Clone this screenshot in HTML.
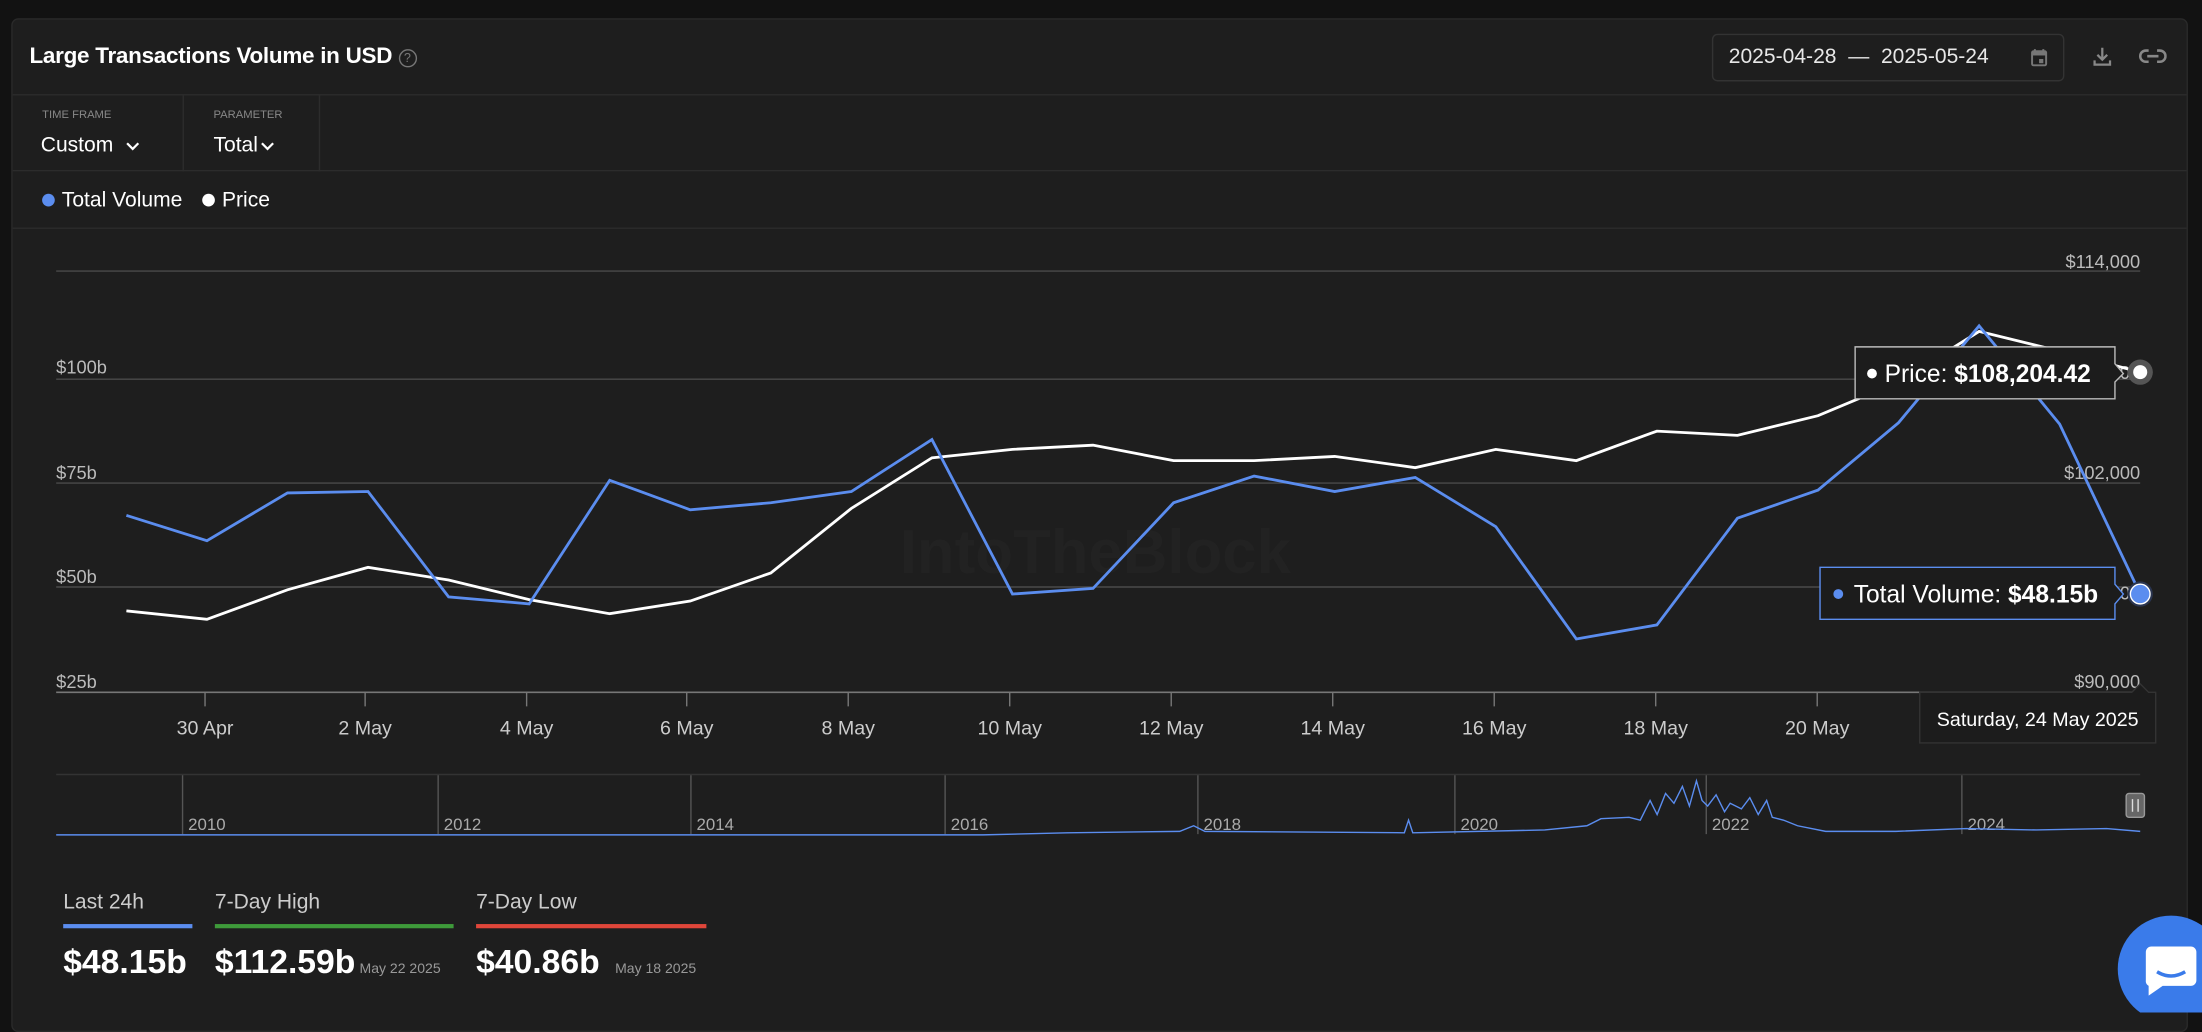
<!DOCTYPE html>
<html><head><meta charset="utf-8"><style>
html,body{margin:0;padding:0;background:#121212;width:2202px;height:1012px;overflow:hidden}
#s{position:absolute;left:0;top:0;width:1568px;height:721px;transform:scale(1.40434);transform-origin:0 0;font-family:"Liberation Sans",sans-serif;color:#fff}
.p{position:absolute;left:8px;top:13px;width:1548px;height:720px;background:#1e1e1e;border:1px solid #2a2a2a;border-radius:5px}
.hl{position:absolute;left:0;width:100%;height:1px;background:#2c2c2c}
.a{position:absolute;white-space:nowrap}
</style></head><body><div id="s">
<div class="p">
 <div class="a" style="left:12px;top:18px;font-size:16px;font-weight:bold;letter-spacing:-0.2px">Large Transactions Volume in USD <span style="display:inline-block;width:11px;height:11px;border:1.3px solid #777;border-radius:50%;color:#777;font-size:9px;text-align:center;line-height:11px;font-weight:normal;vertical-align:1px">?</span></div>
 <div class="a" style="left:1210px;top:10px;width:249px;height:32px;border:1px solid #333;border-radius:4px;font-size:15px;color:#e8e8e8;line-height:32px;text-indent:11px">2025-04-28 &nbsp;— &nbsp;2025-05-24
  <svg style="position:absolute;left:226px;top:9px" width="12" height="14" viewBox="0 0 12 14"><rect x="1" y="2.5" width="10" height="10" rx="1" fill="none" stroke="#777" stroke-width="1.4"/><rect x="1" y="2.5" width="10" height="3" fill="#777"/><rect x="6" y="8" width="3" height="3" fill="#777"/><path d="M3 1v2M9 1v2" stroke="#777" stroke-width="1.4"/></svg></div>
 <svg class="a" style="left:1480px;top:18px" width="16" height="16" viewBox="0 0 16 16"><path d="M8 2v8M4.5 7L8 10.5 11.5 7M2.5 11v3h11v-3" fill="none" stroke="#888" stroke-width="1.6"/></svg>
 <svg class="a" style="left:1514px;top:20px" width="20" height="12" viewBox="0 0 20 12"><path d="M7 2H5a4 4 0 0 0 0 8h2M13 2h2a4 4 0 0 1 0 8h-2M6 6h8" fill="none" stroke="#888" stroke-width="1.8"/></svg>
 <div class="hl" style="top:53px"></div>
 <div class="a" style="left:121px;top:54px;width:1px;height:54px;background:#2c2c2c"></div>
 <div class="a" style="left:218px;top:54px;width:1px;height:54px;background:#2c2c2c"></div>
 <div class="a" style="left:21px;top:63px;font-size:8px;color:#888">TIME FRAME</div>
 <div class="a" style="left:143px;top:63px;font-size:8px;color:#888">PARAMETER</div>
 <div class="a" style="left:20px;top:81px;font-size:15px">Custom <svg width="11" height="8" viewBox="0 0 11 8" style="margin-left:4px"><path d="M1.5 2l4 4 4-4" fill="none" stroke="#fff" stroke-width="1.6"/></svg></div>
 <div class="a" style="left:143px;top:81px;font-size:15px">Total<svg width="11" height="8" viewBox="0 0 11 8" style="margin-left:1px"><path d="M1.5 2l4 4 4-4" fill="none" stroke="#fff" stroke-width="1.6"/></svg></div>
 <div class="hl" style="top:107px"></div>
 <div class="a" style="left:21px;top:120px;font-size:15px"><span style="display:inline-block;width:9px;height:9px;border-radius:50%;background:#5b8def;margin-right:5px"></span>Total Volume <span style="display:inline-block;width:9px;height:9px;border-radius:50%;background:#fff;margin:0 5px 0 10px"></span>Price</div>
 <div class="hl" style="top:148px"></div>
</div>
<svg class="a" style="left:0;top:0" width="1568" height="721" viewBox="0 0 1568 721" font-family="Liberation Sans, sans-serif">
 <g stroke="#4a4a4a" stroke-width="1"><path d="M40 193H1524M40 270H1524M40 344H1524M40 418H1524"/></g>
 <path d="M40 493H1524" stroke="#777" stroke-width="1.2"/>
 <g stroke="#777"><path d="M146 493v10M260 493v10M375 493v10M489 493v10M604 493v10M719 493v10M834 493v10M949 493v10M1064 493v10M1179 493v10M1294 493v10"/></g>
 <text x="780" y="408" font-size="44" font-weight="bold" fill="#222" text-anchor="middle">IntoTheBlock</text>
 <g font-size="13" fill="#bbb"><text x="40" y="266">$100b</text><text x="40" y="341">$75b</text><text x="40" y="415">$50b</text><text x="40" y="490">$25b</text>
 <g text-anchor="end"><text x="1524" y="191">$114,000</text><text x="1524" y="341">$102,000</text><text x="1524" y="490">$90,000</text><text x="1524" y="270">$108,000</text><text x="1524" y="427">$96,000</text></g></g>
 <g font-size="14" fill="#ccc" text-anchor="middle"><text x="146" y="523">30 Apr</text><text x="260" y="523">2 May</text><text x="375" y="523">4 May</text><text x="489" y="523">6 May</text><text x="604" y="523">8 May</text><text x="719" y="523">10 May</text><text x="834" y="523">12 May</text><text x="949" y="523">14 May</text><text x="1064" y="523">16 May</text><text x="1179" y="523">18 May</text><text x="1294" y="523">20 May</text></g>
 <polyline fill="none" stroke="#fff" stroke-width="2" points="90,435 147.36,441 204.72,420 262.08,404 319.44,413 376.8,427 434.16,437 491.52,428 548.88,408 606.24,362 663.6,326 720.96,320 778.32,317 835.68,328 893.04,328 950.4,325 1007.76,333 1065.12,320 1122.48,328 1179.84,307 1237.2,310 1294.56,296 1351.92,272 1409.28,236 1466.64,250 1524,265"/>
 <polyline fill="none" stroke="#5b8def" stroke-width="2" points="90,367 147.36,385 204.72,351 262.08,350 319.44,425 376.8,430 434.16,342 491.52,363 548.88,358 606.24,350 663.6,313 720.96,423 778.32,419 835.68,358 893.04,339 950.4,350 1007.76,340 1065.12,375 1122.48,455 1179.84,445 1237.2,369 1294.56,349 1351.92,301 1409.28,232 1466.64,302 1524,423"/>
 <circle cx="1524" cy="265" r="9" fill="#555"/><circle cx="1524" cy="265" r="5" fill="#fff"/>
 <circle cx="1524" cy="423" r="9" fill="#2a3550"/><circle cx="1524" cy="423" r="7" fill="#5b8def" stroke="#fff" stroke-width="1"/>
 <path d="M1321 247H1506V259L1512 266 1506 272V284H1321Z" fill="#1c1c1c" stroke="#bbb" stroke-width="1"/>
 <circle cx="1333" cy="266" r="3.5" fill="#fff"/>
 <text x="1342" y="272" font-size="17.5" fill="#fff">Price: <tspan font-weight="bold">$108,204.42</tspan></text>
 <path d="M1296 404H1506V416L1512 423 1506 430V441H1296Z" fill="#1c1c1c" stroke="#5b8def" stroke-width="1"/>
 <circle cx="1309" cy="423" r="3.5" fill="#5b8def"/>
 <text x="1320" y="429" font-size="17.5" fill="#fff">Total Volume: <tspan font-weight="bold">$48.15b</tspan></text>
 <path d="M1367 493H1518L1524 487 1530 493H1535V529H1367Z" fill="#1c1c1c" stroke="#333" stroke-width="1"/>
 <text x="1451" y="517" font-size="14" fill="#fff" text-anchor="middle">Saturday, 24 May 2025</text>
 <path d="M40 551.5H1524" stroke="#333"/>
 <g stroke="#555"><path d="M130 552v42M312 552v42M492 552v42M673 552v42M853 552v42M1036 552v42M1215 552v42M1397 552v42"/></g>
 <g font-size="12" fill="#aaa"><text x="134" y="591">2010</text><text x="316" y="591">2012</text><text x="496" y="591">2014</text><text x="677" y="591">2016</text><text x="857" y="591">2018</text><text x="1040" y="591">2020</text><text x="1219" y="591">2022</text><text x="1401" y="591">2024</text></g>
 <path d="M40 594.5H700L760 593 840 592 850 588 858 592 1000 593 1003 584 1006 593 1100 591 1130 588 1140 583 1160 582 1168 584 1175 570 1180 580 1186 565 1192 572 1198 560 1203 574 1208 556 1212 570 1216 574 1222 566 1228 578 1232 572 1240 576 1246 568 1252 580 1258 570 1262 582 1270 584 1280 588 1300 592 1350 592 1400 590 1450 591 1500 590 1524 592" fill="none" stroke="#5b8def" stroke-width="1"/>
 <rect x="1514" y="565" width="13" height="17" rx="2" fill="#666" stroke="#999"/><path d="M1518.5 569v9M1522.5 569v9" stroke="#ddd"/>
 <g font-size="15" fill="#ccc"><text x="45" y="647">Last 24h</text><text x="153" y="647">7-Day High</text><text x="339" y="647">7-Day Low</text></g>
 <rect x="45" y="658" width="92" height="3" fill="#5b8def"/><rect x="153" y="658" width="170" height="3" fill="#3e9a3a"/><rect x="339" y="658" width="164" height="3" fill="#e0463a"/>
 <g font-size="24" font-weight="bold" fill="#fff"><text x="45" y="693">$48.15b</text><text x="153" y="693">$112.59b</text><text x="339" y="693">$40.86b</text></g>
 <g font-size="10" fill="#999"><text x="256" y="693">May 22 2025</text><text x="438" y="693">May 18 2025</text></g>
 <circle cx="1546" cy="690" r="38" fill="#3a7bea"/>
 <path d="M1528 678a4 4 0 0 1 4-4h28a4 4 0 0 1 4 4v20a4 4 0 0 1-4 4h-20l-10 7v-7a4 4 0 0 1-2-4z" fill="#fff"/>
 <path d="M1536 692q10 6 20 0" fill="none" stroke="#3a7bea" stroke-width="2.5"/>
</svg>
</div></body></html>
